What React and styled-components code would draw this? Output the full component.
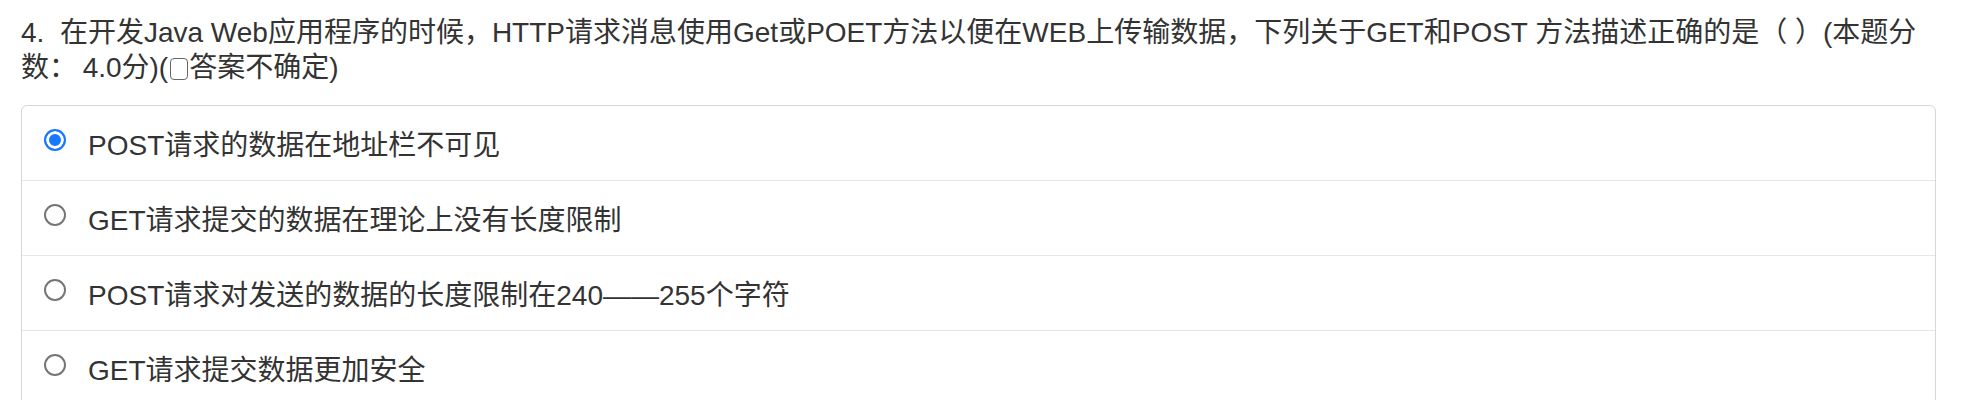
import React, { useState } from "react";
import styled, { createGlobalStyle } from "styled-components";

const GlobalStyle = createGlobalStyle`
  body {
    margin: 0;
    background: #fff;
    font-family: "Liberation Sans", "Noto Sans CJK SC", sans-serif;
    color: #333;
  }
`;

const Page = styled.div`
  padding: 15px 26px 0 21px;
`;

const Question = styled.div`
  font-size: 28px;
  line-height: 35px;
  color: #333;
  margin-bottom: 20px;
`;

const InlineBox = styled.span`
  display: inline-block;
  width: 18px;
  height: 22px;
  border: 1.5px solid #666;
  border-radius: 4px;
  box-sizing: border-box;
  vertical-align: -3px;
  margin: 0 1px 0 2px;
`;

const OptionList = styled.div`
  border: 1px solid #d6d6d6;
  border-radius: 6px;
  overflow: hidden;
`;

const OptionRow = styled.label`
  display: flex;
  align-items: center;
  height: 74px;
  padding: 0 0 0 22px;
  font-size: 28px;
  color: #333;
  cursor: pointer;

  & + & {
    border-top: 1px solid #e6e6e6;
  }
`;

const Radio = styled.span`
  width: 22px;
  height: 22px;
  border-radius: 50%;
  box-sizing: border-box;
  border: 2px solid ${(p) => (p.checked ? "#1677ff" : "#767676")};
  background: ${(p) => (p.checked ? "#1677ff" : "#fff")};
  box-shadow: ${(p) => (p.checked ? "inset 0 0 0 3px #fff" : "none")};
  margin-right: 22px;
  margin-top: -6px;
  flex-shrink: 0;
`;

const options = [
  "POST请求的数据在地址栏不可见",
  "GET请求提交的数据在理论上没有长度限制",
  "POST请求对发送的数据的长度限制在240——255个字符",
  "GET请求提交数据更加安全",
];

const App = () => {
  const [selected, setSelected] = useState(0);

  return (
    <>
      <GlobalStyle />
      <Page>
        <Question>
          4.&nbsp;&nbsp;在开发Java Web应用程序的时候，HTTP请求消息使用Get或POET方法以便在WEB上传输数据，下列关于GET和POST 方法描述正确的是（ ）(本题分数：{"\u2009"}4.0分)(
          <InlineBox />
          答案不确定)
        </Question>
        <OptionList>
          {options.map((text, i) => (
            <OptionRow key={i} onClick={() => setSelected(i)}>
              <Radio checked={selected === i} />
              {text}
            </OptionRow>
          ))}
        </OptionList>
      </Page>
    </>
  );
};

export default App;
